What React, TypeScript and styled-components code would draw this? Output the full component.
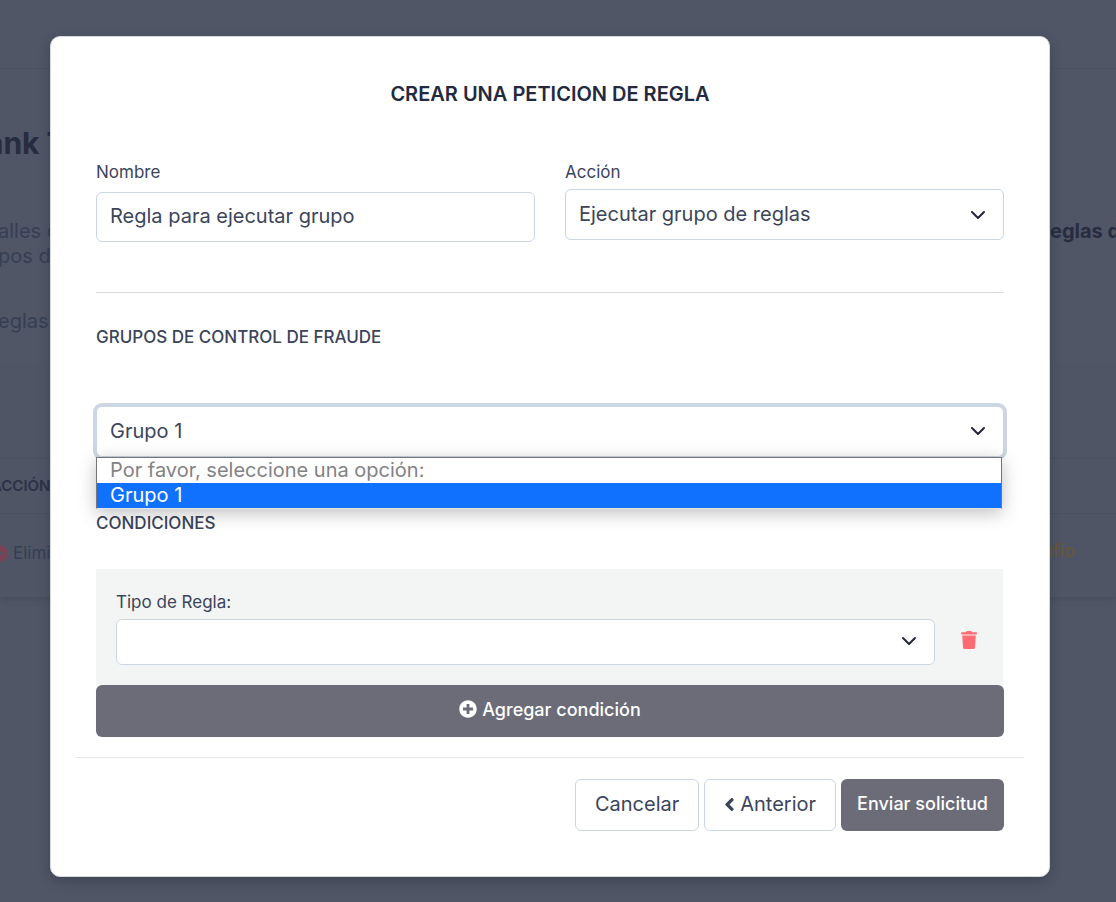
import React, { useState } from "react";
import styled, { createGlobalStyle } from "styled-components";
import { FaAngleLeft, FaMinusCircle, FaPlusCircle, FaTrash } from "react-icons/fa";

const GlobalStyle = createGlobalStyle`
  *, *::before, *::after { box-sizing: border-box; }
  body {
    margin: 0;
    background: #505666;
    color: #3b445b;
    font-family: Inter, "Liberation Sans", sans-serif;
    font-size: 20px;
    line-height: 25px;
  }
  button, input, select { font: inherit; color: inherit; }
`;

const Screen = styled.div`
  position: relative;
  min-height: 100vh;
  overflow: hidden;
`;

/* Dimmed page that lies behind the dialog */
const Backdrop = styled.div`
  position: absolute;
  inset: 0;
  overflow: hidden;
  white-space: nowrap;
  color: #363e54;
`;

const TopBar = styled.div`
  height: 69px;
  border-bottom: 1px solid #4b5161;
`;

const PageHead = styled.div`
  height: 294px;
  margin-left: -2px;
  padding-top: 56px;
`;

const PageTitle = styled.div`
  margin: 0 0 58px -12px;
  font-size: 30px;
  line-height: 36px;
  font-weight: 700;
  color: #272c40;
`;

const PageLine = styled.div`
  display: flex;
  justify-content: space-between;
`;

const PageStrong = styled.strong`
  width: 66px;
  color: #272c40;
`;

const PageNote = styled.div`
  margin-top: 40px;
`;

const TableCard = styled.div`
  background: #4f5565;
  box-shadow: 0 4px 6px -2px rgba(30, 35, 50, 0.16);
`;

const TableRow = styled.div<{ $height: number; $head?: boolean }>`
  display: flex;
  align-items: center;
  justify-content: space-between;
  height: ${(p) => p.$height}px;
  padding-bottom: ${(p) => (p.$head ? 1 : 4)}px;
  border-bottom: 1px solid #495060;
  font-size: ${(p) => (p.$head ? 15 : 17)}px;
  font-weight: ${(p) => (p.$head ? 600 : 400)};
  color: ${(p) => (p.$head ? "#2c3246" : "#363e54")};
`;

const HeadCell = styled.span`
  margin-left: -9px;
`;

const RemoveCell = styled.span`
  display: flex;
  align-items: center;
  gap: 5px;
  margin-left: -9px;
  svg { color: #7a4355; }
`;

const StatusCell = styled.span`
  padding: 0 41px 6px 0;
  font-size: 18px;
  font-weight: 500;
  color: #66573c;
`;

const Overlay = styled.div`
  position: relative;
  display: flex;
  justify-content: center;
  padding: 36px 66px 24px 50px;
`;

const Dialog = styled.form`
  width: 100%;
  max-width: 1000px;
  padding: 44px 25px 45px;
  background: #fff;
  border: 1px solid #d3d9de;
  border-radius: 10px;
  box-shadow: 0 4px 12px rgba(25, 30, 45, 0.3);
`;

const Body = styled.div`
  padding: 0 20px;
`;

const Title = styled.h1`
  margin: 0 0 53px;
  font-size: 20px;
  line-height: 26px;
  font-weight: 600;
  text-align: center;
  color: #232a40;
`;

const Columns = styled.div`
  display: grid;
  grid-template-columns: 1fr 1fr;
  gap: 30px;
`;

const Field = styled.div<{ $gap: number }>`
  display: flex;
  flex-direction: column;
  gap: ${(p) => p.$gap}px;
`;

const Label = styled.label`
  display: block;
  font-size: 17px;
  line-height: 24px;
`;

const TextInput = styled.input`
  width: 100%;
  height: 50px;
  padding: 0 13px 2px;
  border: 1px solid #cbd6e3;
  border-radius: 6px;
  background: #fff;
  outline: none;
`;

const SelectBox = styled.div`
  position: relative;
  flex: 1;
`;

const SelectInput = styled.select<{ $height: number; $open?: boolean }>`
  display: block;
  width: 100%;
  height: ${(p) => p.$height}px;
  padding: 0 42px 1px 13px;
  border: 1px solid #cbd6e3;
  border-radius: 6px;
  background: #fff;
  appearance: none;
  outline: none;
  box-shadow: ${(p) => (p.$open ? "0 0 0 3px #cdd7e4" : "none")};
`;

const Arrow = styled.svg`
  position: absolute;
  top: 50%;
  right: 18px;
  width: 16px;
  height: 16px;
  margin-top: -9px;
  pointer-events: none;
`;

const Options = styled.ul`
  position: absolute;
  top: 100%;
  left: 0;
  right: 2px;
  z-index: 2;
  margin: 0;
  padding: 0;
  list-style: none;
  background: #fff;
  border: 1px solid #75767a;
  border-bottom-color: #e4e4e4;
  box-shadow: 0 4px 18px rgba(0, 0, 0, 0.26);
`;

const Option = styled.li<{ $selected?: boolean }>`
  padding-left: 13px;
  color: ${(p) => (p.$selected ? "#fff" : "#828285")};
  background: ${(p) => (p.$selected ? "#1071ff" : "#fff")};
`;

const Rule = styled.hr`
  height: 1px;
  margin: 50px 0 32px;
  border: 0;
  background: #d6dbe4;
`;

const FooterRule = styled(Rule)`
  margin: 20px 0 21px;
  background: #e2e5ec;
`;

const Heading = styled.h2<{ $after: number }>`
  margin: 0 0 ${(p) => p.$after}px;
  font-size: 17px;
  line-height: 24px;
  font-weight: 500;
`;

const GroupField = styled.div`
  margin-bottom: 54px;
`;

const Condition = styled.div`
  margin-right: 1px;
  padding: 21px 20px 20px;
  background: #f3f5f5;
`;

const ConditionRow = styled.div`
  display: flex;
  align-items: center;
  margin-top: 5px;
`;

const DeleteButton = styled.button`
  display: flex;
  justify-content: center;
  width: 68px;
  margin-right: -20px;
  padding: 0 0 4px;
  border: 0;
  background: none;
  color: #ff6b72;
`;

const Button = styled.button<{ $solid?: boolean; $wide?: boolean }>`
  display: flex;
  align-items: center;
  justify-content: center;
  gap: 5px;
  width: ${(p) => (p.$wide ? "100%" : "auto")};
  height: 52px;
  padding: ${(p) => (p.$solid ? "0 16px 4px" : "0 19px 2px")};
  border: ${(p) => (p.$solid ? "0" : "1px solid #cbd6e3")};
  border-radius: 6px;
  background: ${(p) => (p.$solid ? "#6b6c78" : "#fff")};
  color: ${(p) => (p.$solid ? "#fff" : "#3b445b")};
  font-size: ${(p) => (p.$solid ? 18 : 20)}px;
  font-weight: ${(p) => (p.$solid ? 500 : 400)};
`;

const BackIcon = styled(FaAngleLeft)`
  width: 11px;
  height: 21px;
`;

const Actions = styled.div`
  display: flex;
  justify-content: flex-end;
  gap: 5px;
  padding: 0 20px;
`;

function Chevron() {
  return (
    <Arrow viewBox="0 0 16 16" fill="none" aria-hidden="true">
      <path d="m2 5 6 6 6-6" stroke="#212639" strokeWidth="2" strokeLinecap="round" strokeLinejoin="round" />
    </Arrow>
  );
}

export default function App() {
  const [name, setName] = useState("Regla para ejecutar grupo");

  return (
    <Screen>
      <GlobalStyle />
      <Backdrop aria-hidden="true">
        <TopBar />
        <PageHead>
          <PageTitle>ank T</PageTitle>
          <PageLine>
            <span>alles d</span>
            <PageStrong>eglas d</PageStrong>
          </PageLine>
          <PageLine>pos d</PageLine>
          <PageNote>eglas</PageNote>
        </PageHead>
        <TableCard>
          <TableRow $height={96} />
          <TableRow $height={55} $head>
            <HeadCell>ACCIÓN</HeadCell>
          </TableRow>
          <TableRow $height={84}>
            <RemoveCell>
              <FaMinusCircle size={17} />
              Elimi
            </RemoveCell>
            <StatusCell>afío</StatusCell>
          </TableRow>
        </TableCard>
      </Backdrop>

      <Overlay>
        <Dialog role="dialog" aria-labelledby="dialog-title" onSubmit={(e) => e.preventDefault()}>
          <Body>
            <Title id="dialog-title">CREAR UNA PETICION DE REGLA</Title>
            <Columns>
              <Field $gap={8}>
                <Label htmlFor="name">Nombre</Label>
                <TextInput id="name" value={name} onChange={(e) => setName(e.target.value)} />
              </Field>
              <Field $gap={5}>
                <Label htmlFor="action">Acción</Label>
                <SelectBox>
                  <SelectInput id="action" $height={51}>
                    <option>Ejecutar grupo de reglas</option>
                  </SelectInput>
                  <Chevron />
                </SelectBox>
              </Field>
            </Columns>
            <Rule />
            <Heading $after={57}>GRUPOS DE CONTROL DE FRAUDE</Heading>
            <GroupField>
              <SelectBox>
                <SelectInput aria-label="Grupos de control de fraude" $height={51} $open>
                  <option>Grupo 1</option>
                </SelectInput>
                <Chevron />
                <Options role="listbox">
                  <Option role="option" aria-selected={false}>Por favor, seleccione una opción:</Option>
                  <Option role="option" aria-selected $selected>Grupo 1</Option>
                </Options>
              </SelectBox>
            </GroupField>
            <Heading $after={34}>CONDICIONES</Heading>
            <Condition>
              <Label htmlFor="rule-type">Tipo de Regla:</Label>
              <ConditionRow>
                <SelectBox>
                  <SelectInput id="rule-type" $height={46} defaultValue="">
                    <option value="" />
                  </SelectInput>
                  <Chevron />
                </SelectBox>
                <DeleteButton type="button" aria-label="Eliminar condición">
                  <FaTrash size={18} />
                </DeleteButton>
              </ConditionRow>
            </Condition>
            <Button type="button" $solid $wide>
              <FaPlusCircle size={18} />
              Agregar condición
            </Button>
          </Body>
          <FooterRule />
          <Actions>
            <Button type="button">Cancelar</Button>
            <Button type="button">
              <BackIcon />
              Anterior
            </Button>
            <Button type="submit" $solid>Enviar solicitud</Button>
          </Actions>
        </Dialog>
      </Overlay>
    </Screen>
  );
}
